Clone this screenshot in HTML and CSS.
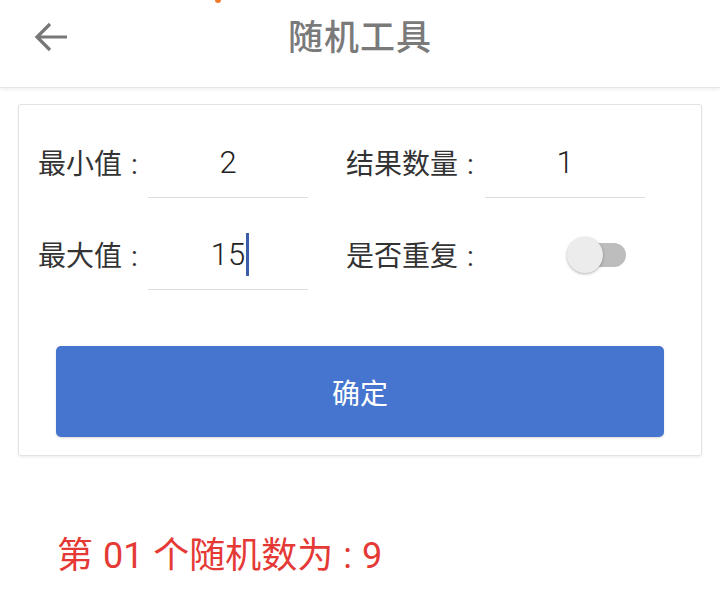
FILE: index.html
```html
<!DOCTYPE html>
<html lang="zh-CN">
<head>
<meta charset="utf-8">
<title>随机工具</title>
<link rel="stylesheet" href="styles.css">
</head>
<body>
<header class="topbar">
  <span class="status-dot"></span>
  <button class="back" aria-label="返回">
    <svg width="36" height="32" viewBox="0 0 36 32">
      <path d="M3 16 H33 M16 3 L3 16 L16 29" fill="none" stroke="#777" stroke-width="3.2" stroke-linecap="butt" stroke-linejoin="miter"/>
    </svg>
  </button>
  <h1 class="title">随机工具</h1>
</header>

<main class="content">
  <section class="card">
    <div class="form-grid">
      <div class="label">最小值 :</div>
      <div class="field"><span class="value">2</span></div>
      <div class="label label-right">结果数量 :</div>
      <div class="field"><span class="value">1</span></div>

      <div class="label">最大值 :</div>
      <div class="field"><span class="value">15<span class="caret"></span></span></div>
      <div class="label label-right">是否重复 :</div>
      <div class="switch-cell">
        <span class="switch"><span class="track"></span><span class="thumb"></span></span>
      </div>
    </div>
    <button class="confirm">确定</button>
  </section>

  <p class="result">第 01 个随机数为 : 9</p>
</main>
</body>
</html>
```

FILE: styles.css
```css
* { box-sizing: border-box; }

html, body {
  margin: 0;
  padding: 0;
  background: #ffffff;
  font-family: Roboto, "Noto Sans CJK SC", sans-serif;
  color: #333;
}

body {
  width: 720px;
  height: 611px;
  overflow: hidden;
}

.topbar {
  position: relative;
  height: 88px;
  display: flex;
  align-items: center;
  justify-content: center;
  background: #fff;
  border-bottom: 1px solid #e6e6e6;
  box-shadow: 0 2px 3px rgba(0,0,0,0.06);
}

.status-dot {
  position: absolute;
  left: 215px;
  top: -3px;
  width: 6px;
  height: 6px;
  border-radius: 50%;
  background: #f07a2a;
}

.back {
  position: absolute;
  left: 34px;
  top: 21px;
  width: 36px;
  height: 32px;
  padding: 0;
  border: 0;
  background: none;
  display: block;
}
.back svg { display: block; }

.title {
  margin: 0;
  margin-top: -18px;
  font-family: "Noto Sans CJK SC", sans-serif;
  font-size: 35px;
  font-weight: 500;
  color: #7a7a7a;
  letter-spacing: 1px;
}

.content {
  padding: 16px 18px 0 18px;
}

.card {
  border: 1px solid #e4e4e4;
  border-radius: 3px;
  box-shadow: 0 1px 3px rgba(0,0,0,0.08);
  background: #fff;
  padding: 22px 0 19px 19px;
  height: 352px;
}

.form-grid {
  display: grid;
  grid-template-columns: 110px 160px 177px 160px;
  grid-auto-rows: 71px;
  row-gap: 21px;
}

.label {
  display: flex;
  align-items: center;
  font-family: Roboto, "Noto Sans CJK SC", sans-serif;
  font-size: 28px;
  color: #333;
  white-space: nowrap;
  padding-bottom: 2px;
  word-spacing: 2px;
}
.label-right { padding-left: 38px; }

.field {
  border-bottom: 1px solid #dcdcdc;
  display: flex;
  align-items: center;
  justify-content: center;
}

.value {
  position: relative;
  font-family: Roboto, sans-serif;
  font-size: 31px;
  font-weight: 300;
  color: #222;
  line-height: 1;
}

.caret {
  position: absolute;
  right: -4px;
  top: -6px;
  width: 3px;
  height: 43px;
  background: #3a5fa8;
}

.switch-cell {
  display: flex;
  align-items: center;
  justify-content: flex-end;
  padding-right: 19px;
}

.switch {
  position: relative;
  width: 59px;
  height: 38px;
  display: block;
}
.track {
  position: absolute;
  left: 3px;
  top: 7px;
  width: 56px;
  height: 24px;
  border-radius: 12px;
  background: #bdbdbd;
}
.thumb {
  position: absolute;
  left: 0;
  top: 1px;
  width: 36px;
  height: 36px;
  border-radius: 50%;
  background: #ececec;
  box-shadow: 0 1px 3px rgba(0,0,0,0.3);
}

.confirm {
  display: block;
  margin: 56px 0 0 18px;
  width: 608px;
  height: 91px;
  border: 0;
  border-radius: 5px;
  background: #4575cf;
  color: #fff;
  font-family: "Noto Sans CJK SC", sans-serif;
  font-size: 28px;
  box-shadow: 0 1px 2px rgba(0,0,0,0.15);
}

.result {
  margin: 79px 0 0 39px;
  font-family: Roboto, "Noto Sans CJK SC", sans-serif;
  font-size: 36px;
  color: #e53935;
  line-height: 1.2;
  word-spacing: 1px;
}
```
